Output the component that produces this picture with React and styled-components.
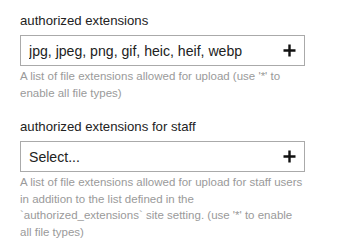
import React from 'react';
import styled, { createGlobalStyle } from 'styled-components';

const GlobalStyle = createGlobalStyle`
  body {
    margin: 0;
    background: #fff;
    font-family: "Liberation Sans", Arial, sans-serif;
  }
`;

const fields = [
  {
    label: 'authorized extensions',
    value: 'jpg, jpeg, png, gif, heic, heif, webp',
    help: "A list of file extensions allowed for upload (use '*' to enable all file types)",
  },
  {
    label: 'authorized extensions for staff',
    value: '',
    help: "A list of file extensions allowed for upload for staff users in addition to the list defined in the `authorized_extensions` site setting. (use '*' to enable all file types)",
  },
];

function PlusIcon() {
  return (
    <svg width="13" height="13" viewBox="0 0 13 13">
      <path d="M6.5 0.5v12M0.5 6.5h12" stroke="#111" strokeWidth="2.4" />
    </svg>
  );
}

function App() {
  return (
    <StyledPage>
      <GlobalStyle />
      {fields.map(field => (
        <StyledField key={field.label}>
          <StyledLabel>{field.label}</StyledLabel>
          <StyledSelect>
            <StyledValue>{field.value || 'Select...'}</StyledValue>
            <StyledAdd>
              <PlusIcon />
            </StyledAdd>
          </StyledSelect>
          <StyledHelp>{field.help}</StyledHelp>
        </StyledField>
      ))}
    </StyledPage>
  );
}

const StyledPage = styled.div`
  padding: 12px 0 0 20px;
  display: flex;
  flex-direction: column;
  gap: 17px;
`;
const StyledField = styled.div`
  width: 285px;
  display: flex;
  flex-direction: column;
`;
const StyledLabel = styled.div`
  font-size: 13.2px;
  line-height: 17px;
  color: #222;
  margin-bottom: 6px;
`;
const StyledSelect = styled.div`
  height: 31px;
  box-sizing: border-box;
  border: 1px solid #aaa;
  display: flex;
  align-items: center;
  padding: 0 8px;
`;
const StyledValue = styled.div`
  flex: 1;
  font-size: 14.1px;
  color: #222;
  white-space: nowrap;
  overflow: hidden;
`;
const StyledAdd = styled.div`
  display: flex;
  align-items: center;
`;
const StyledHelp = styled.div`
  width: 285.5px;
  margin-top: 2px;
  font-size: 11.5px;
  line-height: 16.5px;
  color: #9a9a9a;
`;

export default App;
